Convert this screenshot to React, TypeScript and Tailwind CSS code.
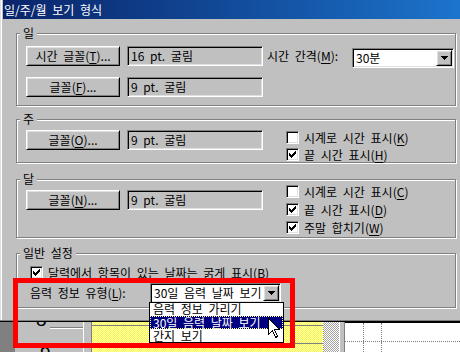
import React from "react";

const raised =
  "border border-t-white border-l-white border-r-black border-b-black bg-[#c0c0c0] shadow-[inset_1px_1px_0_#dfdfdf,inset_-1px_-1px_0_#808080]";
const sunken =
  "border border-t-[#808080] border-l-[#808080] border-r-white border-b-white shadow-[inset_1px_1px_0_#000,inset_-1px_-1px_0_#dfdfdf]";

const Key = ({ children }: { children: React.ReactNode }) => (
  <span className="underline underline-offset-[2px]">{children}</span>
);

const Button = ({ label, k }: { label: string; k: string }) => (
  <div className={`${raised} w-[94px] h-[20px] shrink-0 flex items-center justify-center`}>
    {label}(<Key>{k}</Key>)...
  </div>
);

const Field = ({ text }: { text: string }) => (
  <div className={`${sunken} w-[136px] h-[20px] ml-[7px] shrink-0 flex items-center pl-[3px]`}>
    {text}
  </div>
);

const Arrow = () => (
  <svg width="7" height="4" shapeRendering="crispEdges">
    <path d="M0 0h7v1h-1v1h-1v1h-1v1h-1v-1h-1v-1h-1v-1h-1z" fill="#000" />
  </svg>
);

const Combo = ({ text, className }: { text: string; className: string }) => (
  <div className={`${sunken} bg-white h-[20px] p-[1px] flex items-center shrink-0 ${className}`}>
    <span className="flex-1 pl-[2px] whitespace-nowrap">{text}</span>
    <div className={`${raised} w-[16px] h-[16px] flex items-center justify-center`}>
      <Arrow />
    </div>
  </div>
);

const Check = ({ checked, label, k }: { checked?: boolean; label: string; k: string }) => (
  <div className="flex items-center h-[13px] whitespace-nowrap">
    <div className={`${sunken} bg-white w-[13px] h-[13px] shrink-0 relative`}>
      {checked && (
        <svg className="absolute left-[2px] top-[2px]" width="7" height="7" shapeRendering="crispEdges">
          <path d="M0.5 2.5L2.5 4.5L6.5 0.5M0.5 3.5L2.5 5.5L6.5 1.5M0.5 4.5L2.5 6.5L6.5 2.5" stroke="#000" fill="none" />
        </svg>
      )}
    </div>
    <span className="ml-[5px]">
      {label}(<Key>{k}</Key>)
    </span>
  </div>
);

const Group = ({
  title,
  className,
  children,
}: {
  title: string;
  className: string;
  children: React.ReactNode;
}) => (
  <div
    className={`relative w-[440px] border border-[#808080] shadow-[inset_1px_1px_0_#fff,1px_1px_0_#fff] ${className}`}
  >
    <span className="absolute left-[3px] -top-[8px] bg-[#c0c0c0] px-[3px] leading-[14px] whitespace-nowrap">
      {title}
    </span>
    {children}
  </div>
);

export default function App() {
  return (
    <div className="relative w-[460px] h-[352px] overflow-hidden bg-[#808080] text-black text-[12px] leading-[14px] [word-spacing:3px] font-['Noto_Sans_CJK_KR',sans-serif]">
      {/* dialog */}
      <div className="h-[322px] bg-[#c0c0c0] pl-[3px] shadow-[inset_0_-1px_0_#000,inset_0_-2px_0_#808080,inset_1px_0_0_#dfdfdf,inset_2px_0_0_#fff]">
        <div className="h-[19px] bg-linear-to-r from-[#0a246a] to-[#1c74cc] text-white flex items-center pl-[1px]">
          일/주/월 보기 형식
        </div>
        <div className="pl-[13px] pt-[14px]">
          <Group title="일" className="h-[73px]">
            <div className="pt-[12px] pl-[9px]">
              <div className="flex items-start">
                <Button label="시간 글꼴" k="T" />
                <Field text="16 pt. 굴림" />
                <div className="ml-[4px] w-[85px] h-[20px] flex items-center whitespace-nowrap">
                  시간 간격(<Key>M</Key>):
                </div>
                <Combo text="30분" className="w-[102px] mt-[2px]" />
              </div>
              <div className="flex items-start mt-[9px]">
                <Button label="글꼴" k="F" />
                <Field text="9 pt. 굴림" />
              </div>
            </div>
          </Group>

          <Group title="주" className="h-[44px] mt-[13px]">
            <div className="pt-[10px] pl-[9px] flex items-start">
              <Button label="글꼴" k="O" />
              <Field text="9 pt. 굴림" />
              <div className="ml-[23px] mt-[1px] flex flex-col gap-[4px]">
                <Check label="시계로 시간 표시" k="K" />
                <Check checked label="끝 시간 표시" k="H" />
              </div>
            </div>
          </Group>

          <Group title="달" className="h-[59px] mt-[16px]">
            <div className="pt-[10px] pl-[9px] flex items-start">
              <Button label="글꼴" k="N" />
              <Field text="9 pt. 굴림" />
              <div className="ml-[23px] -mt-[5px] flex flex-col gap-[5px]">
                <Check label="시계로 시간 표시" k="C" />
                <Check checked label="끝 시간 표시" k="D" />
                <Check checked label="주말 합치기" k="W" />
              </div>
            </div>
          </Group>

          <Group title="일반 설정" className="h-[55px] mt-[15px]">
            <div className="pt-[12px] pl-[13px]">
              <Check checked label="달력에서 항목이 있는 날짜는 굵게 표시" k="B" />
              <div className="flex items-center mt-[4px]">
                <div className="w-[120px] whitespace-nowrap">
                  음력 정보 유형(<Key>L</Key>):
                </div>
                <Combo text="30일 음력 날짜 보기" className="w-[131px]" />
              </div>
            </div>
          </Group>
        </div>
      </div>

      {/* calendar window behind the dialog */}
      <div className="flex h-[30px]">
        <div className="w-[15px] bg-[#808080]" />
        <div className="w-[68px] bg-[#c0c0c0] overflow-hidden flex flex-col">
          <div className="flex items-start">
            <span className="ml-[21px] -mt-[12px] text-[19px] leading-[20px] font-['Liberation_Sans',sans-serif]">8</span>
            <div className="ml-[3px] mt-[5px] w-[34px] h-[2px] border-t border-[#808080] border-b border-b-white" />
          </div>
          <span className="ml-[25px] mt-[14px] text-[19px] leading-[20px] font-['Liberation_Sans',sans-serif]">9</span>
        </div>
        <div className="w-[9px] bg-[#c0c0c0] border-l border-white border-r border-r-[#808080]" />
        <div className="w-[231px] bg-[repeating-conic-gradient(#ffff00_0_25%,#ffffff_0_50%)] bg-size-[2px_2px] flex flex-col pt-[3px]">
          <div className="h-px bg-[#808080]" />
          <div className="h-px bg-[#808080] mt-[17px]" />
        </div>
        <div className="w-[16px] bg-[repeating-conic-gradient(#a0a0a0_0_25%,#ffffff_0_50%)] bg-size-[2px_2px]" />
        <div className="w-[6px] bg-[#c0c0c0] border-l border-white border-r border-r-[#808080]" />
        <div className="flex-1 bg-white border-t border-black flex flex-col">
          <div className="flex h-[19px] border-b border-dotted border-[#808080]">
            <div className="w-[19px] border-r border-dotted border-[#808080]" />
            <div className="w-[18px] border-r border-dotted border-[#808080]" />
          </div>
          <div className="flex flex-1">
            <div className="w-[19px] border-r border-dotted border-[#808080]" />
            <div className="w-[18px] border-r border-dotted border-[#808080]" />
          </div>
        </div>
      </div>

      {/* open dropdown list */}
      <div className="absolute left-[149px] top-[302px] w-[135px] h-[41px] bg-white border border-black leading-[13px] whitespace-nowrap">
        <div className="h-[13px] pl-[3px] -mt-[1px]">음력 정보 가리기</div>
        <div className="h-[13px] pl-[3px] mt-[1px] bg-[#000080] text-white outline outline-1 outline-dotted outline-[#ffff80] -outline-offset-1">
          30일 음력 날짜 보기
        </div>
        <div className="h-[13px] pl-[3px]">간지 보기</div>
      </div>

      {/* mouse pointer */}
      <svg className="absolute left-[268px] top-[318px]" width="13" height="21" shapeRendering="crispEdges">
        <path
          d="M0.5 0.5L0.5 16.5L4.5 12.5L7.5 19.5L9.5 18.5L6.5 11.5L11.5 11.5Z"
          fill="#fff"
          stroke="#000"
          strokeWidth="1"
        />
      </svg>

      {/* red annotation frame */}
      <div className="absolute left-[13px] top-[278px] w-[282px] h-[70px] border-[5px] border-[#ff0000]" />
    </div>
  );
}
